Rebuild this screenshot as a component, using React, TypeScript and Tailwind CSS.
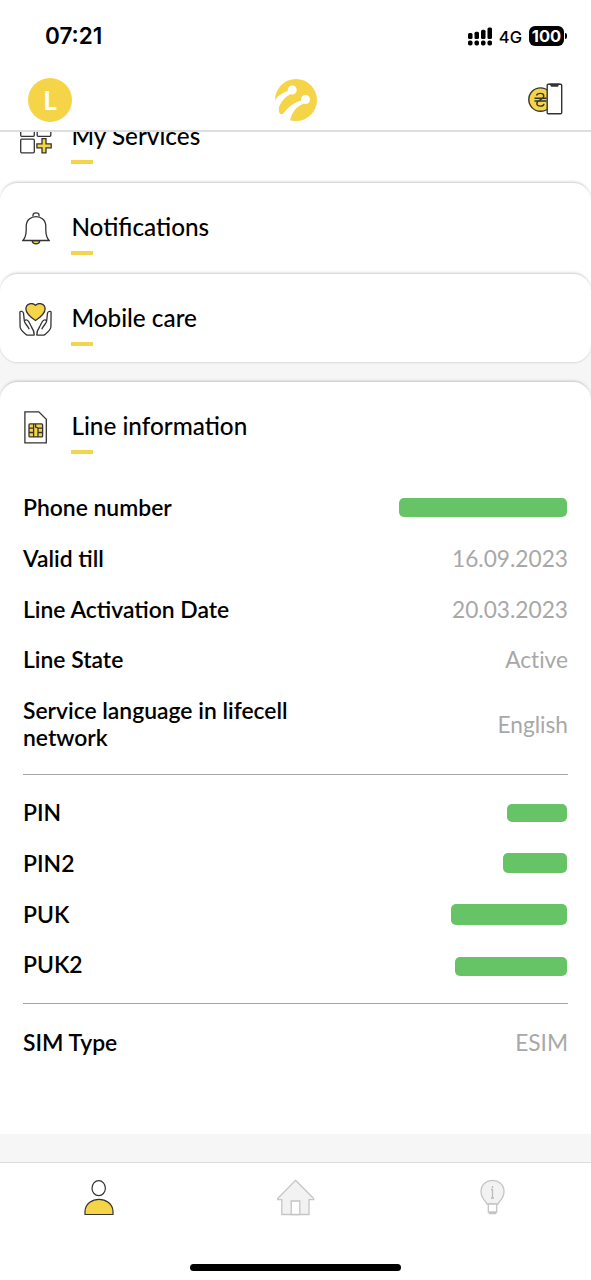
import type { ReactNode } from "react";

const ink = "#333333";
const yellow = "#f6d447";

function SignalIcon() {
  return (
    <svg width="25" height="19" viewBox="0 0 25 19" fill="#000">
      <rect x="0" y="6" width="4.500" height="6" rx="1.500" />
      <rect x="6.500" y="4.700" width="4.500" height="7.300" rx="1.500" />
      <rect x="13" y="2.700" width="4.500" height="9.300" rx="1.500" />
      <rect x="19.500" y="0.500" width="4.500" height="11.500" rx="1.500" />
      {[0, 6.5, 13, 19.5].map((x) => (
        <rect key={x} x={x} y="13.500" width="4.500" height="5" rx="1.800" />
      ))}
    </svg>
  );
}

function BrandLogo() {
  return (
    <svg width="42" height="42" viewBox="0 0 42 42">
      <circle cx="21" cy="21" r="21" fill={yellow} />
      <g fill="#fff">
        <circle cx="17.200" cy="11" r="4.500" />
        <path d="M14 11.500C8.500 13 3.500 16 0 21L-2 32L3.700 29.500C5 23.500 10.500 16.800 18 14Z" />
        <circle cx="30.500" cy="20.500" r="4.500" />
        <path d="M28 21C19.500 23 13.500 28 9.800 32.700C8.200 35 5.500 36.300 4.200 34.500L3.700 29L-2 30L2 44H13L15.300 41C17 32.500 22.500 26.500 31.500 23.600Z" />
      </g>
    </svg>
  );
}

function WalletIcon() {
  return (
    <svg width="36" height="34" viewBox="0 0 36 34" fill="none" stroke={ink} strokeWidth="1.400">
      <circle cx="12.500" cy="16.600" r="11.700" fill={yellow} />
      <path d="M8.500 12.500C9 9.800 15.800 9.300 15.800 13C15.800 16.500 8.800 17 8.800 20.500C8.800 24.200 15.500 23.700 16 20.800M6.500 15.300H18.500M6.500 18H18.500" />
      <rect x="19.200" y="1.200" width="14.500" height="29.500" rx="1" fill="#fff" />
      <path d="M22.500 1.200H30.500L29.500 3H23.500Z" fill={ink} />
    </svg>
  );
}

function ServicesIcon() {
  return (
    <svg width="32" height="32" viewBox="0 0 32 32" fill="none" stroke={ink} strokeWidth="1.300">
      <rect x="0.700" y="0.700" width="13.600" height="13.600" rx="1" />
      <rect x="17.200" y="0.700" width="13.600" height="13.600" rx="1" />
      <rect x="0.700" y="17.200" width="13.600" height="13.600" rx="1" />
      <path d="M22 16.700H26V21.900H31.200V25.800H26V30.900H22V25.800H16.900V21.900H22Z" fill={yellow} />
    </svg>
  );
}

function BellIcon() {
  return (
    <svg width="28" height="33" viewBox="0 0 28 33" fill="none" stroke={ink} strokeWidth="1.300">
      <path d="M10.200 28.600C10.500 32.800 17.500 32.800 17.800 28.600Z" fill={yellow} />
      <path d="M11 4.500V3C11 .2 17 .2 17 3V4.500" />
      <path d="M.900 28.500C3.600 25.500 4.200 22 4.200 18V14.500C4.200 1.200 23.800 1.200 23.800 14.500V18C23.800 22 24.400 25.500 27.100 28.500Z" fill="#fff" />
    </svg>
  );
}

function CareIcon() {
  const hand =
    "M.900 9.200C1.200 8 3.800 8 4.500 10L5.300 17.700C7.500 15.800 9.500 17.500 10.500 20L12.500 24C14.700 27 15.200 28.500 15.200 32.100H7.800C5 29.500 1.500 27.500 1.100 24ZM5.300 17.700C5.400 20.500 8.400 22 10.200 26.200";
  return (
    <svg width="33" height="34" viewBox="0 0 33 34" fill="none" stroke={ink} strokeWidth="1.300" strokeLinejoin="round">
      <path d={hand} />
      <path d={hand} transform="matrix(-1 0 0 1 33 0)" />
      <path d="M16.500 17.500C12 14.500 6.900 11 6.900 6C6.900 .4 13.700-.8 16.500 2.300C19.300-.8 26.100.4 26.100 6C26.100 11 21 14.500 16.500 17.500Z" fill={yellow} />
    </svg>
  );
}

function SimIcon() {
  return (
    <svg width="24" height="33" viewBox="0 0 24 33" fill="none" stroke={ink} strokeWidth="1.300">
      <path d="M.900 .900H14.800L22.300 8.200V31.800H.900Z" />
      <rect x="5" y="12.900" width="13.600" height="13" rx="1" fill={yellow} />
      <path d="M5 17.200H9.600M5 21.500H9.600M14 17.200H18.600M14 21.500H18.600M9.600 13V26M14 26V17L11.600 16V13" />
    </svg>
  );
}

function Card({ icon, title, className = "", children }: { icon: ReactNode; title: string; className?: string; children?: ReactNode }) {
  return (
    <section className={`shrink-0 rounded-t-[18px] bg-white shadow-[0_-2px_3px_-1px_rgba(0,0,0,0.22)] ${className}`}>
      <div className="flex h-[91px]">
        <div className="flex w-[71px] items-center justify-center">{icon}</div>
        <div className="flex flex-col pl-[0.400px] pt-[29px]">
          <h2 className="whitespace-nowrap text-[24.300px] font-medium leading-[30px]">{title}</h2>
          <div className="mt-[9px] h-1 w-[22px] bg-[#f3d44f]" />
        </div>
      </div>
      {children}
    </section>
  );
}

function Row({ label, children }: { label: string; children: ReactNode }) {
  return (
    <div className="flex items-center justify-between py-[11.850px] leading-[27px]">
      <span className="max-w-[290px] text-[22.900px] font-semibold">{label}</span>
      <span className="text-[22.700px] text-[#a8a8a8] [font-variant-ligatures:none]">{children}</span>
    </div>
  );
}

function Mask({ className }: { className: string }) {
  return <div className={`mr-px rounded-[5px] bg-[#66c467] ${className}`} />;
}

export default function App() {
  return (
    <div className="flex h-[1280px] w-[591px] flex-col overflow-hidden bg-white font-['Lato',sans-serif] text-black">
      <header className="flex h-[132px] shrink-0 flex-col border-b-2 border-[#dedede]">
        <div className="flex h-[72px] items-center justify-between pl-[45px] pr-[24px] font-['Inter',sans-serif]">
          <span className="text-[22.500px] font-semibold">07:21</span>
          <div className="flex items-center">
            <SignalIcon />
            <span className="ml-[6px] pt-[2px] text-[16.500px] font-medium">4G</span>
            <span className="ml-[7px] flex h-[20px] w-[35px] items-center justify-center rounded-[6px] bg-black text-[16.500px] font-bold text-white">100</span>
            <span className="ml-px h-[6px] w-[2px] rounded-r bg-black" />
          </div>
        </div>
        <div className="flex h-[58px] items-start justify-between pl-[28px] pr-[27px] pt-[6px]">
          <div className="flex size-[44px] items-center justify-center rounded-full bg-[#f6d447] text-[26px] font-bold text-white">L</div>
          <div className="pr-[9px] pt-px"><BrandLogo /></div>
          <div className="pt-[5px]"><WalletIcon /></div>
        </div>
      </header>

      <main className="flex h-[1030px] shrink-0 flex-col overflow-hidden bg-[#f6f6f6]">
        <div className="-mt-[40px] h-[270px] shrink-0 rounded-b-[18px] bg-white shadow-[0_1px_2px_rgba(0,0,0,0.12)]">
          <Card icon={<ServicesIcon />} title="My Services" />
          <Card icon={<BellIcon />} title="Notifications" />
          <Card icon={<CareIcon />} title="Mobile care" className="h-[88px] rounded-b-[18px]" />
        </div>
        <Card icon={<SimIcon />} title="Line information" className="mt-[20px] h-[752px]">
          <div className="px-[23px] pt-[9.500px]">
            <Row label="Phone number"><Mask className="h-[19px] w-[168px]" /></Row>
            <Row label="Valid till">16.09.2023</Row>
            <Row label="Line Activation Date">20.03.2023</Row>
            <Row label="Line State">Active</Row>
            <Row label="Service language in lifecell network">English</Row>
            <hr className="mb-[12.500px] mt-[11px] border-[#a5a5a5]" />
            <Row label="PIN"><Mask className="h-[18px] w-[60px]" /></Row>
            <Row label="PIN2"><Mask className="h-[20px] w-[64px]" /></Row>
            <Row label="PUK"><Mask className="h-[21px] w-[116px]" /></Row>
            <Row label="PUK2"><Mask className="mt-[4px] h-[19px] w-[112px]" /></Row>
            <hr className="mb-[13px] mt-[13px] border-[#a5a5a5]" />
            <Row label="SIM Type">ESIM</Row>
          </div>
        </Card>
      </main>

      <nav className="flex h-[118px] shrink-0 flex-col items-center border-t border-[#dcdcdc] bg-white">
        <div className="grid h-[101px] w-full grid-cols-3 justify-items-center pt-[16px]">
          <svg width="32" height="38" viewBox="0 0 32 38" fill="none" stroke={ink} strokeWidth="1.200">
            <ellipse cx="15.700" cy="9.200" rx="6.700" ry="7.500" />
            <path d="M2 35.500V32C3.500 16.500 28.500 16.500 30 32V35.500Z" fill={yellow} />
          </svg>
          <svg width="38" height="38" viewBox="0 0 38 38" fill="#f2f2f2" stroke="#c5c5c5" strokeWidth="1.300">
            <path d="M18.500 1.300L36.700 19.500V20.600H32V35.500H4.800V20.600H.700V19.500Z" />
            <path d="M14.200 35.500V22H22.800V35.500Z" fill="#fff" />
          </svg>
          <svg width="26" height="38" viewBox="0.5 0 26 38" fill="#f2f2f2" stroke="#c5c5c5" strokeWidth="1.300">
            <path d="M7.500 25C7 22.500 1.500 20 1.500 12.500C1.500-2.300 24.500-2.300 24.500 12.500C24.500 20 19 22.500 18.500 25Z" />
            <path d="M8.800 25H17.200V33H8.800ZM9.800 33V34.500H16.200V33" fill="#fff" />
            <path d="M13 10V19M13 7V9M11.500 10.500H13M11.500 19H14.500" stroke="#bbb" />
          </svg>
        </div>
        <div className="h-[7px] w-[211px] shrink-0 rounded-full bg-black" />
      </nav>
    </div>
  );
}
